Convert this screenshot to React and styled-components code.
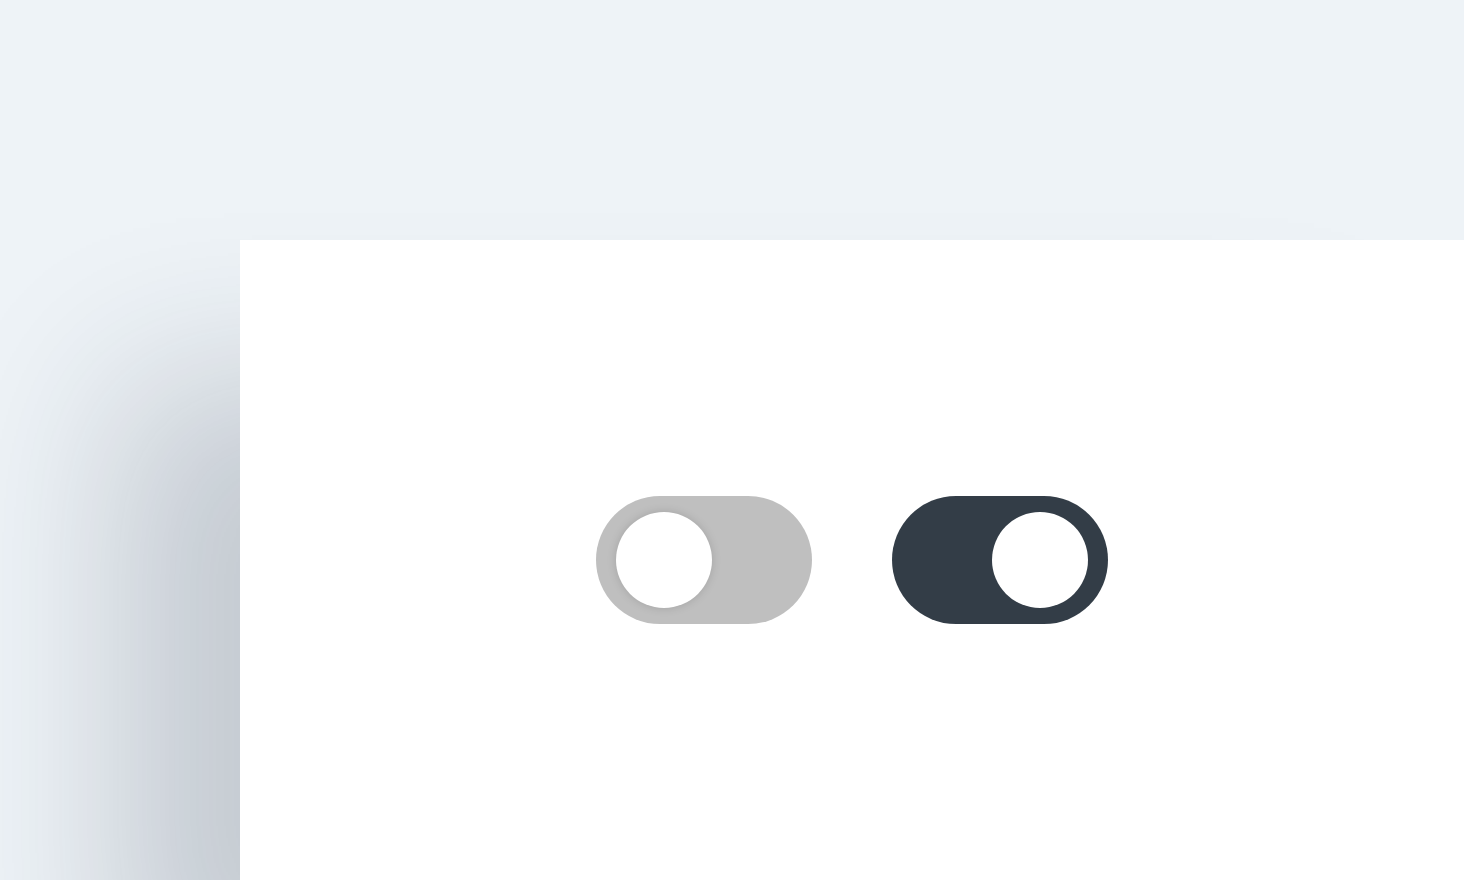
import styled, { createGlobalStyle } from "styled-components";

const GlobalStyle = createGlobalStyle`
  html, body {
    margin: 0;
    padding: 0;
    background: #eef3f7;
    font-family: "Inter", "Liberation Sans", sans-serif;
  }
`;

const Page = styled.div`
  width: 100vw;
  height: 100vh;
  box-sizing: border-box;
  padding: 240px 0 0 240px;
  display: flex;
  overflow: hidden;
  background: #eef3f7;
`;

const Panel = styled.div`
  flex: 1;
  background: #ffffff;
  box-shadow: -120px 140px 160px rgba(30, 41, 59, 0.2);
  display: flex;
  align-items: center;
  justify-content: center;
  gap: 80px;
`;

const Track = styled.button`
  position: relative;
  width: 216px;
  height: 128px;
  padding: 0;
  border: none;
  border-radius: 64px;
  background: ${(p) => (p.$on ? "#333d47" : "#bfbfbf")};
  cursor: pointer;
`;

const Knob = styled.span`
  position: absolute;
  top: 16px;
  left: ${(p) => (p.$on ? "100px" : "20px")};
  width: 96px;
  height: 96px;
  border-radius: 50%;
  background: #ffffff;
  box-shadow: ${(p) => (p.$on ? "none" : "0 0 10px rgba(0, 0, 0, 0.15)")};
`;

const Toggle = ({ on }) => (
  <Track $on={on} aria-pressed={on}>
    <Knob $on={on} />
  </Track>
);

const App = () => {
  return (
    <>
      <GlobalStyle />
      <Page>
        <Panel>
          <Toggle on={false} />
          <Toggle on={true} />
        </Panel>
      </Page>
    </>
  );
};

export default App;
